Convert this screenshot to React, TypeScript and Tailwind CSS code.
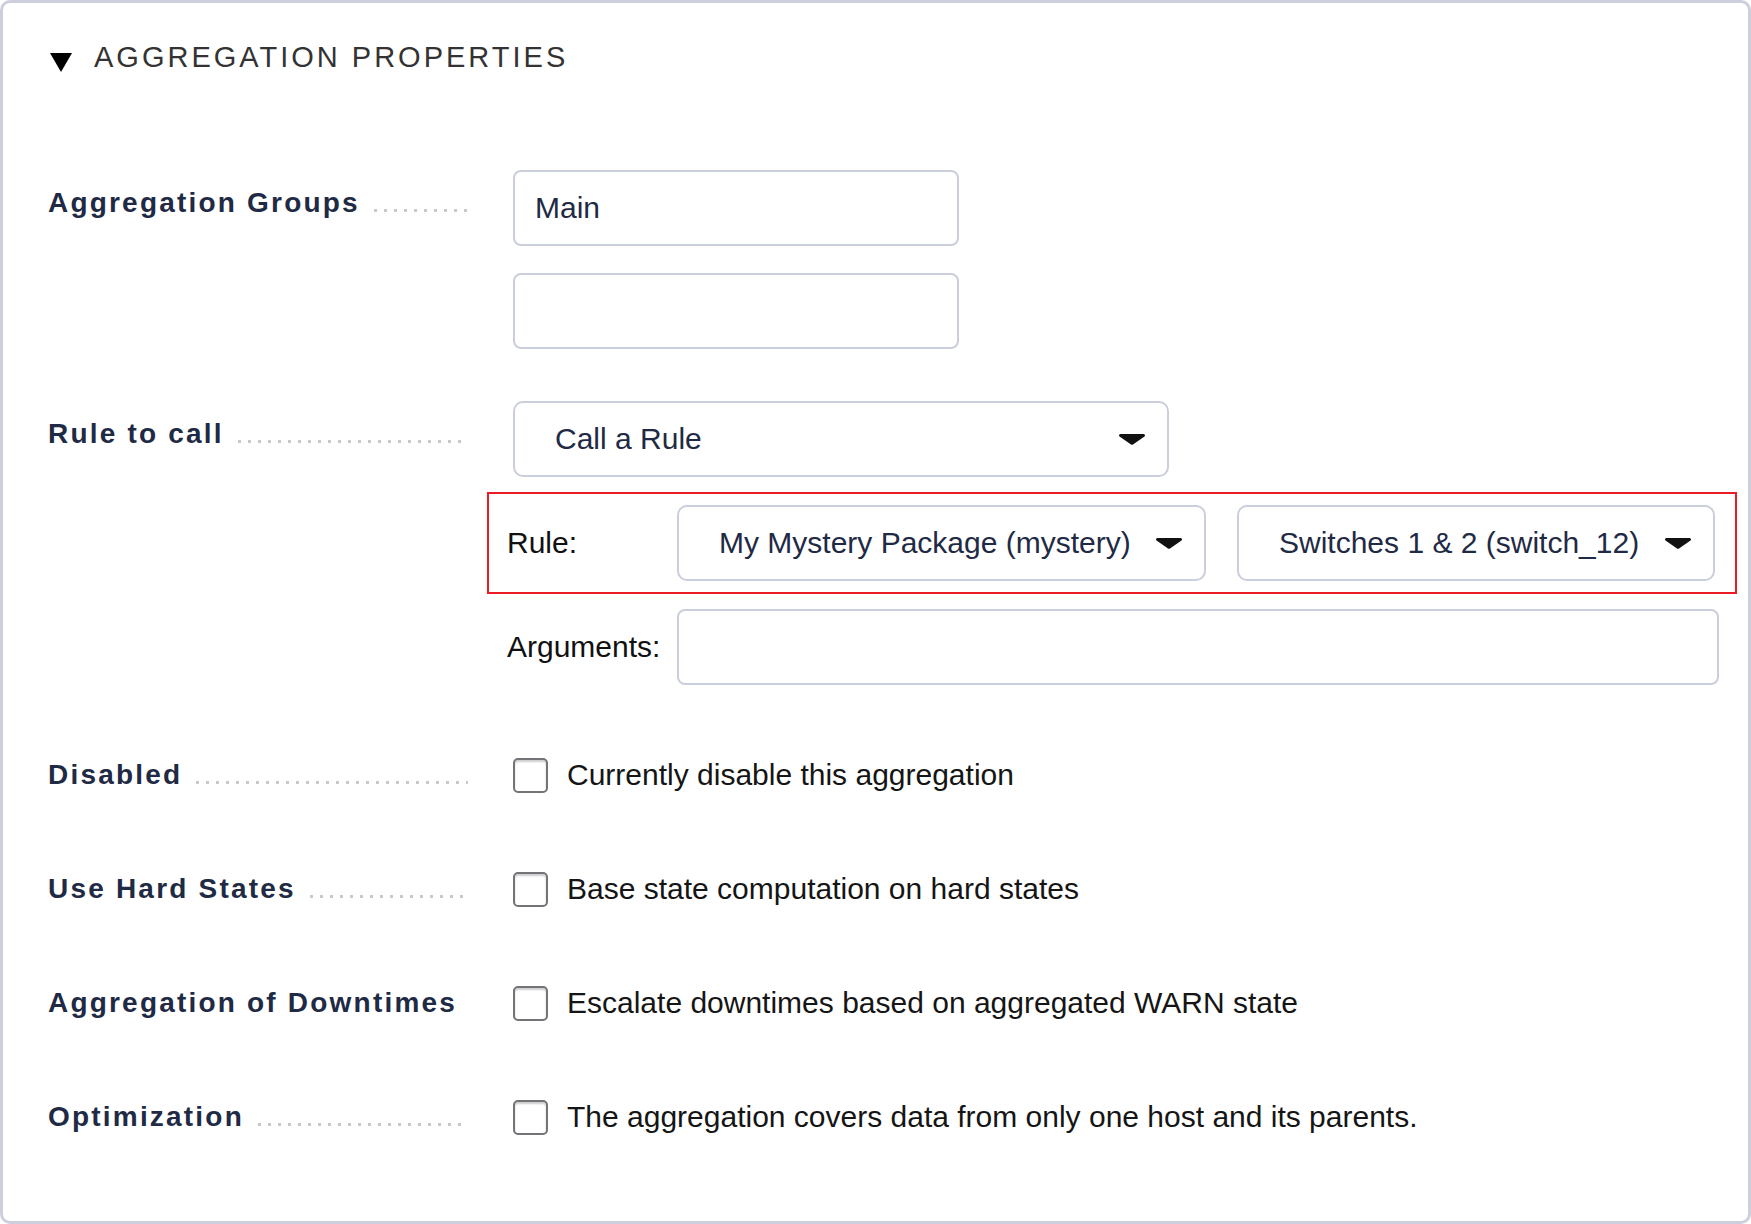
import React from 'react'

const labelText = "text-[28px] font-bold tracking-[2.2px] leading-[34px] text-[#1f2a44] whitespace-nowrap"
const fieldBorder = "border-2 border-[#cbcedb] bg-white"

function Leader({ label, dots = true }: { label: string; dots?: boolean }) {
  return (
    <div className="flex w-[420px] shrink-0 items-baseline">
      <span className={labelText}>{label}</span>
      {dots && (
        <span className="ml-[14px] h-[3px] min-w-0 flex-1 bg-[linear-gradient(to_right,#c9c9c9_3px,transparent_3px)] bg-[length:10px_3px] bg-repeat-x" />
      )}
    </div>
  )
}

function Caret() {
  return (
    <svg width="26" height="11" viewBox="0 0 26 11" className="shrink-0">
      <path d="M1.5 0h23a1.5 1.5 0 0 1 1 2.6L14 10.4a1.5 1.5 0 0 1-2 0L.5 2.6A1.5 1.5 0 0 1 1.5 0z" fill="#111" />
    </svg>
  )
}

function Select({ value, className }: { value: string; className: string }) {
  return (
    <div className={`flex h-[76px] items-center justify-between rounded-[10px] pl-[40px] pr-[22px] ${fieldBorder} ${className}`}>
      <span className="text-[30px] leading-[34px] text-[#1f2a44] whitespace-nowrap">{value}</span>
      <Caret />
    </div>
  )
}

function TextInput({ value, className }: { value?: string; className: string }) {
  return (
    <input
      readOnly
      defaultValue={value}
      className={`block h-[76px] rounded-[8px] px-[20px] text-[30px] text-[#1f2a44] outline-none ${fieldBorder} ${className}`}
    />
  )
}

function CheckRow({ label, text, className, dots = true }: { label: string; text: string; className: string; dots?: boolean }) {
  return (
    <div className={`flex h-[40px] items-center gap-x-[45px] ${className}`}>
      <Leader label={label} dots={dots} />
      <label className="flex items-center">
        <span className="h-[35px] w-[35px] shrink-0 rounded-[5px] border-2 border-[#737478] bg-white shadow-[inset_0_2px_2px_rgba(0,0,0,0.2)]" />
        <span className="ml-[19px] text-[30px] leading-[34px] text-[#151515] whitespace-nowrap">{text}</span>
      </label>
    </div>
  )
}

export default function App() {
  return (
    <div className="h-screen w-full bg-white font-['Liberation_Sans',Arial,sans-serif]">
      <div className="h-full rounded-[10px] border-[3px] border-[#cdd0dc] pl-[45px] pt-[37px]">
        <div className="flex items-start">
          <svg width="22" height="19" viewBox="0 0 22 19" className="ml-[2px] mt-[13px] shrink-0">
            <polygon points="0,0 22,0 11,19" fill="#000" />
          </svg>
          <h2 className="ml-[22px] text-[29px] leading-[34px] tracking-[3px] text-[#333]">AGGREGATION PROPERTIES</h2>
        </div>

        <div className="mt-[96px] flex items-start gap-x-[45px]">
          <div className="pt-[16px]">
            <Leader label="Aggregation Groups" />
          </div>
          <div>
            <TextInput value="Main" className="w-[446px]" />
            <TextInput className="mt-[27px] w-[446px]" />
          </div>
        </div>

        <div className="mt-[52px] flex items-start gap-x-[45px]">
          <div className="pt-[16px]">
            <Leader label="Rule to call" />
          </div>
          <div>
            <Select value="Call a Rule" className="w-[656px]" />

            <div className="ml-[-26px] mt-[15px] flex w-[1250px] items-center border-2 border-[#ec1c24] py-[11px] pl-[18px]">
              <span className="w-[170px] text-[30px] leading-[34px] text-[#111]">Rule:</span>
              <Select value="My Mystery Package (mystery)" className="w-[529px]" />
              <Select value="Switches 1 & 2 (switch_12)" className="ml-[31px] w-[478px]" />
            </div>

            <div className="ml-[-6px] mt-[15px] flex items-center">
              <span className="w-[170px] text-[30px] leading-[34px] text-[#111]">Arguments:</span>
              <TextInput className="w-[1042px]" />
            </div>
          </div>
        </div>

        <CheckRow className="mt-[70px]" label="Disabled" text="Currently disable this aggregation" />
        <CheckRow className="mt-[74px]" label="Use Hard States" text="Base state computation on hard states" />
        <CheckRow className="mt-[74px]" label="Aggregation of Downtimes" text="Escalate downtimes based on aggregated WARN state" dots={false} />
        <CheckRow className="mt-[74px]" label="Optimization" text="The aggregation covers data from only one host and its parents." />
      </div>
    </div>
  )
}
